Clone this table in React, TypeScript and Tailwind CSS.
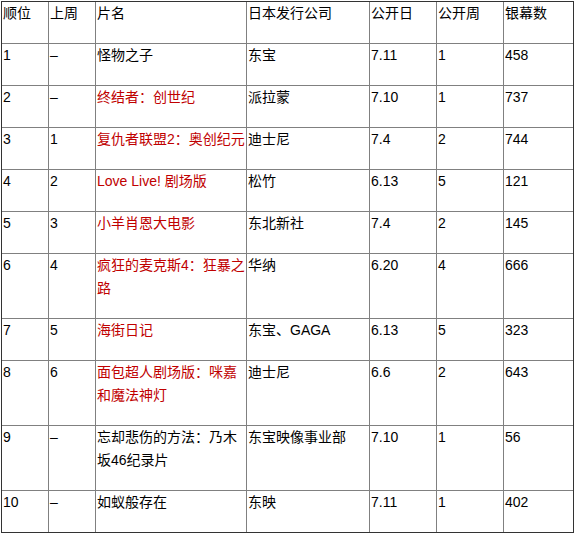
import React from 'react';

interface Row {
  rank: string;
  last: string;
  title: string;
  distributor: string;
  date: string;
  weeks: string;
  screens: string;
  red?: boolean;
}

const rows: Row[] = [
  { rank: '1', last: '–', title: '怪物之子', distributor: '东宝', date: '7.11', weeks: '1', screens: '458' },
  { rank: '2', last: '–', title: '终结者：创世纪', distributor: '派拉蒙', date: '7.10', weeks: '1', screens: '737', red: true },
  { rank: '3', last: '1', title: '复仇者联盟2：奥创纪元', distributor: '迪士尼', date: '7.4', weeks: '2', screens: '744', red: true },
  { rank: '4', last: '2', title: 'Love Live! 剧场版', distributor: '松竹', date: '6.13', weeks: '5', screens: '121', red: true },
  { rank: '5', last: '3', title: '小羊肖恩大电影', distributor: '东北新社', date: '7.4', weeks: '2', screens: '145', red: true },
  { rank: '6', last: '4', title: '疯狂的麦克斯4：狂暴之路', distributor: '华纳', date: '6.20', weeks: '4', screens: '666', red: true },
  { rank: '7', last: '5', title: '海街日记', distributor: '东宝、GAGA', date: '6.13', weeks: '5', screens: '323', red: true },
  { rank: '8', last: '6', title: '面包超人剧场版：咪嘉和魔法神灯', distributor: '迪士尼', date: '6.6', weeks: '2', screens: '643', red: true },
  { rank: '9', last: '–', title: '忘却悲伤的方法：乃木坂46纪录片', distributor: '东宝映像事业部', date: '7.10', weeks: '1', screens: '56' },
  { rank: '10', last: '–', title: '如蚁般存在', distributor: '东映', date: '7.11', weeks: '1', screens: '402' },
];

const headers = ['顺位', '上周', '片名', '日本发行公司', '公开日', '公开周', '银幕数'];
const widths = ['w-[47px]', 'w-[47px]', 'w-[151px]', 'w-[123px]', 'w-[67px]', 'w-[67px]', 'w-[69px]'];

// cells: top-aligned, one text line plus blank space below
const cell = 'align-top p-0 pl-px pb-[18px] leading-[23px] border-r border-b border-[#808080] last:border-r-0';

export default function App() {
  return (
    <div className="bg-white min-h-screen pt-px pl-px font-['Liberation_Sans','Noto_Sans_CJK_SC',sans-serif] text-[14px] text-black">
      <table className="table-fixed border-separate border-spacing-0 w-[573px] border border-[#333]">
        <colgroup>
          {widths.map((w, i) => (
            <col key={i} className={w} />
          ))}
        </colgroup>
        <tbody>
          <tr>
            {headers.map((h) => (
              <td key={h} className={`${cell} font-normal`}>{h}</td>
            ))}
          </tr>
          {rows.map((r, i) => {
            const last = i === rows.length - 1 ? 'border-b-0' : '';
            return (
              <tr key={r.rank}>
                <td className={`${cell} ${last}`}>{r.rank}</td>
                <td className={`${cell} ${last}`}>{r.last}</td>
                <td className={`${cell} ${last} ${r.red ? 'text-[#c00000]' : ''}`}>{r.title}</td>
                <td className={`${cell} ${last}`}>{r.distributor}</td>
                <td className={`${cell} ${last}`}>{r.date}</td>
                <td className={`${cell} ${last}`}>{r.weeks}</td>
                <td className={`${cell} ${last}`}>{r.screens}</td>
              </tr>
            );
          })}
        </tbody>
      </table>
    </div>
  );
}
